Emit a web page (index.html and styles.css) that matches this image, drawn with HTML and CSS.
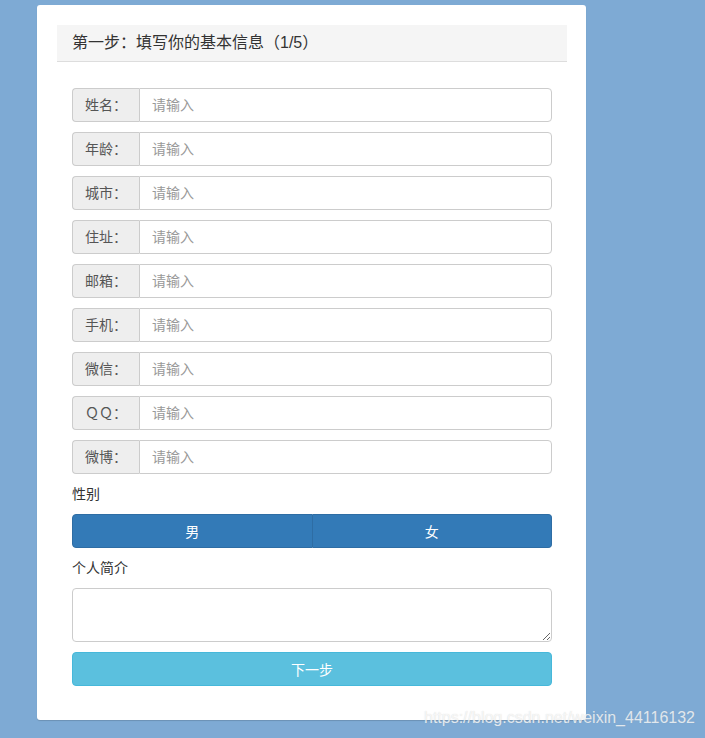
FILE: index.html
```html
<!DOCTYPE html>
<html lang="zh-CN">
<head>
<meta charset="UTF-8" />
<title>填写基本信息</title>
<link rel="stylesheet" href="styles.css">
</head>
<body>

<!-- Step panel -->
<div class="card">
  <div class="panel-heading">第一步：填写你的基本信息（1/5）</div>
  <div class="panel-body">
    <div class="input-group"><span class="addon">姓名：</span><input type="text" placeholder="请输入" /></div>
    <div class="input-group"><span class="addon">年龄：</span><input type="text" placeholder="请输入" /></div>
    <div class="input-group"><span class="addon">城市：</span><input type="text" placeholder="请输入" /></div>
    <div class="input-group"><span class="addon">住址：</span><input type="text" placeholder="请输入" /></div>
    <div class="input-group"><span class="addon">邮箱：</span><input type="text" placeholder="请输入" /></div>
    <div class="input-group"><span class="addon">手机：</span><input type="text" placeholder="请输入" /></div>
    <div class="input-group"><span class="addon">微信：</span><input type="text" placeholder="请输入" /></div>
    <div class="input-group"><span class="addon">ＱＱ：</span><input type="text" placeholder="请输入" /></div>
    <div class="input-group"><span class="addon">微博：</span><input type="text" placeholder="请输入" /></div>

    <label class="field-label">性别</label>
    <div class="btn-group">
      <button class="btn-primary">男</button>
      <button class="btn-primary">女</button>
    </div>

    <label class="field-label">个人简介</label>
    <textarea class="intro"></textarea>

    <button class="btn-next">下一步</button>
  </div>
</div>

<div class="watermark">https://blog.csdn.net/weixin_44116132</div>

</body>
</html>
```
FILE: styles.css
```css
body {
  margin: 0;
  height: 738px;
  background: #7eaad4;
  font-family: "Liberation Sans", "Noto Sans CJK SC", sans-serif;
  font-size: 14px;
  color: #333;
  position: relative;
  overflow: hidden;
}

/* Card */
.card {
  margin: 5px 0 0 37px;
  width: 549px;
  box-sizing: border-box;
  padding: 20px 19px 34px 20px;
  background: #fff;
  border-radius: 3px;
  box-shadow: 0 1px 1px rgba(0, 0, 0, 0.15);
}
.panel-heading {
  height: 36px;
  line-height: 36px;
  padding: 0 15px;
  background: #f5f5f5;
  border-bottom: 1px solid #ddd;
  font-size: 16px;
  color: #333;
}
.panel-body {
  padding: 26px 15px 0 15px;
}

/* Input rows */
.input-group {
  display: flex;
  height: 34px;
  margin-bottom: 10px;
}
.input-group .addon {
  width: 67px;
  box-sizing: border-box;
  text-align: center;
  line-height: 32px;
  background: #eee;
  color: #555;
  border: 1px solid #ccc;
  border-right: none;
  border-radius: 4px 0 0 4px;
}
.input-group input {
  flex: 1;
  min-width: 0;
  box-sizing: border-box;
  border: 1px solid #ccc;
  border-radius: 0 4px 4px 0;
  padding: 0 12px;
  font: inherit;
  color: #555;
  outline: none;
}
.input-group input::placeholder {
  color: #999;
}

.field-label {
  display: block;
  height: 20px;
  line-height: 20px;
  margin: 10px 0;
  color: #333;
}
.input-group + .field-label {
  margin-top: 0;
}

/* Gender buttons */
.btn-group {
  display: flex;
  height: 34px;
}
.btn-group button {
  flex: 1;
  font: inherit;
  color: #fff;
  background: #337ab7;
  border: 1px solid #2e6da4;
  cursor: pointer;
}
.btn-group button:first-child {
  border-radius: 4px 0 0 4px;
}
.btn-group button:last-child {
  border-left: none;
  border-radius: 0 4px 4px 0;
}

.intro {
  display: block;
  width: 100%;
  height: 54px;
  box-sizing: border-box;
  border: 1px solid #ccc;
  border-radius: 4px;
  padding: 6px 12px;
  font: inherit;
  resize: both;
}

.btn-next {
  display: block;
  width: 100%;
  height: 34px;
  margin-top: 10px;
  font: inherit;
  color: #fff;
  background: #5bc0de;
  border: 1px solid #46b8da;
  border-radius: 4px;
  cursor: pointer;
}

/* Site watermark over the corner */
.watermark {
  position: absolute;
  right: 10px;
  top: 709px;
  font-family: "Liberation Sans", sans-serif;
  font-size: 16px;
  color: rgba(255, 255, 255, 0.75);
  text-shadow: 0 0 1px rgba(150, 150, 150, 0.4);
}
```
